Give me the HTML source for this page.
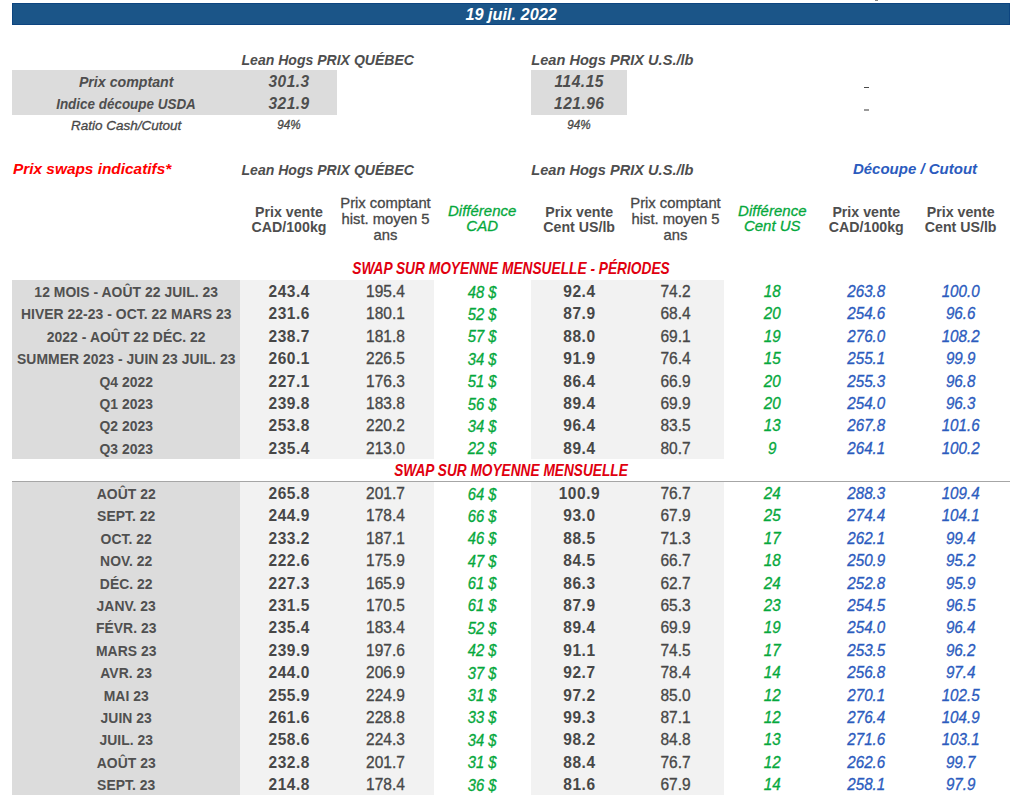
<!DOCTYPE html>
<html><head><meta charset="utf-8"><title>Lean Hogs</title>
<style>
html,body{margin:0;padding:0;background:#fff;}
body{width:1024px;height:795px;overflow:hidden;position:relative;font-family:"Liberation Sans", sans-serif;}
</style></head><body>
<div style="position:absolute;left:12px;top:2.6px;width:997.5px;height:22.2px;background:#1b5588;box-shadow:inset 0 0 0 1px #0d4580"></div>
<div style="position:absolute;left:12px;top:70px;width:325px;height:44.6px;background:#dcdcdc;"></div>
<div style="position:absolute;left:531px;top:70px;width:96px;height:44.6px;background:#dcdcdc;"></div>
<div style="position:absolute;left:12px;top:280px;width:228px;height:178.6px;background:#dcdcdc;"></div>
<div style="position:absolute;left:240px;top:280px;width:194px;height:178.6px;background:#f2f2f2;"></div>
<div style="position:absolute;left:531px;top:280px;width:193px;height:178.6px;background:#f2f2f2;"></div>
<div style="position:absolute;left:12px;top:481px;width:997.5px;height:1px;background:#a6a6a6;"></div>
<div style="position:absolute;left:12px;top:482px;width:228px;height:313px;background:#dcdcdc;"></div>
<div style="position:absolute;left:240px;top:482px;width:194px;height:313px;background:#f2f2f2;"></div>
<div style="position:absolute;left:531px;top:482px;width:193px;height:313px;background:#f2f2f2;"></div>
<div style="position:absolute;left:311.10px;top:3.50px;width:400px;text-align:center;line-height:20px;height:20px;font-size:16.3px;font-weight:bold;font-style:italic;color:#ffffff;white-space:nowrap">19 juil. 2022</div>
<div style="position:absolute;left:241.50px;top:49.50px;line-height:20px;height:20px;font-size:14.05px;font-weight:bold;font-style:italic;color:#4e4e4e;transform:scale(1.0,1.08);transform-origin:0 15.00px;white-space:nowrap">Lean Hogs PRIX QUÉBEC</div>
<div style="position:absolute;left:531.30px;top:49.50px;line-height:20px;height:20px;font-size:14.6px;font-weight:bold;font-style:italic;color:#4e4e4e;transform:scale(1.0,1.05);transform-origin:0 15.00px;white-space:nowrap">Lean Hogs PRIX U.S./lb</div>
<div style="position:absolute;left:-73.80px;top:71.90px;width:400px;text-align:center;line-height:20px;height:20px;font-size:14.2px;font-weight:bold;font-style:italic;color:#4e4e4e;white-space:nowrap">Prix comptant</div>
<div style="position:absolute;left:-73.80px;top:93.90px;width:400px;text-align:center;line-height:20px;height:20px;font-size:14.3px;font-weight:bold;font-style:italic;color:#4e4e4e;transform:scale(0.94,1.0);transform-origin:50% 15.00px;white-space:nowrap">Indice découpe USDA</div>
<div style="position:absolute;left:89.05px;top:72.40px;width:400px;text-align:center;line-height:20px;height:20px;font-size:15.5px;font-weight:bold;font-style:italic;color:#4e4e4e;letter-spacing:0.5px;transform:scale(1.0,1.06);transform-origin:50% 15.50px;white-space:nowrap">301.3</div>
<div style="position:absolute;left:89.05px;top:94.40px;width:400px;text-align:center;line-height:20px;height:20px;font-size:15.5px;font-weight:bold;font-style:italic;color:#4e4e4e;letter-spacing:0.5px;transform:scale(1.0,1.06);transform-origin:50% 15.50px;white-space:nowrap">321.9</div>
<div style="position:absolute;left:379.25px;top:72.40px;width:400px;text-align:center;line-height:20px;height:20px;font-size:15.5px;font-weight:bold;font-style:italic;color:#4e4e4e;letter-spacing:0.5px;transform:scale(1.0,1.06);transform-origin:50% 15.50px;white-space:nowrap">114.15</div>
<div style="position:absolute;left:379.25px;top:94.40px;width:400px;text-align:center;line-height:20px;height:20px;font-size:15.5px;font-weight:bold;font-style:italic;color:#4e4e4e;letter-spacing:0.5px;transform:scale(1.0,1.06);transform-origin:50% 15.50px;white-space:nowrap">121.96</div>
<div style="position:absolute;left:-73.80px;top:115.70px;width:400px;text-align:center;line-height:20px;height:20px;font-size:13.5px;font-weight:normal;font-style:italic;color:#474747;-webkit-text-stroke:0.3px #474747;white-space:nowrap">Ratio Cash/Cutout</div>
<div style="position:absolute;left:89.00px;top:114.70px;width:400px;text-align:center;line-height:20px;height:20px;font-size:11.7px;font-weight:normal;font-style:italic;color:#474747;-webkit-text-stroke:0.3px #474747;transform:scale(1.0,1.12);transform-origin:50% 14.50px;white-space:nowrap">94%</div>
<div style="position:absolute;left:379.00px;top:114.70px;width:400px;text-align:center;line-height:20px;height:20px;font-size:11.7px;font-weight:normal;font-style:italic;color:#474747;-webkit-text-stroke:0.3px #474747;transform:scale(1.0,1.12);transform-origin:50% 14.50px;white-space:nowrap">94%</div>
<div style="position:absolute;left:864px;top:87px;width:5px;height:1px;background:#4a4a4a;"></div>
<div style="position:absolute;left:875px;top:0px;width:3px;height:1px;background:#8a8a8a;"></div>
<div style="position:absolute;left:864px;top:109px;width:5px;height:2px;background:#9a9a9a;"></div>
<div style="position:absolute;left:13.00px;top:159.10px;line-height:20px;height:20px;font-size:15.4px;font-weight:bold;font-style:italic;color:#ff0000;white-space:nowrap">Prix swaps indicatifs*</div>
<div style="position:absolute;left:241.50px;top:159.60px;line-height:20px;height:20px;font-size:14.05px;font-weight:bold;font-style:italic;color:#4e4e4e;transform:scale(1.0,1.08);transform-origin:0 15.00px;white-space:nowrap">Lean Hogs PRIX QUÉBEC</div>
<div style="position:absolute;left:531.30px;top:159.60px;line-height:20px;height:20px;font-size:14.6px;font-weight:bold;font-style:italic;color:#4e4e4e;transform:scale(1.0,1.05);transform-origin:0 15.00px;white-space:nowrap">Lean Hogs PRIX U.S./lb</div>
<div style="position:absolute;left:715.00px;top:159.20px;width:400px;text-align:center;line-height:20px;height:20px;font-size:15.0px;font-weight:bold;font-style:italic;color:#2b5bbe;white-space:nowrap">Découpe / Cutout</div>
<div style="position:absolute;left:89.00px;top:201.60px;width:400px;text-align:center;line-height:20px;height:20px;font-size:14.2px;font-weight:bold;font-style:normal;color:#4e4e4e;white-space:nowrap">Prix vente</div>
<div style="position:absolute;left:89.00px;top:216.90px;width:400px;text-align:center;line-height:20px;height:20px;font-size:14.2px;font-weight:bold;font-style:normal;color:#4e4e4e;white-space:nowrap">CAD/100kg</div>
<div style="position:absolute;left:185.50px;top:193.40px;width:400px;text-align:center;line-height:20px;height:20px;font-size:14.8px;font-weight:normal;font-style:normal;color:#474747;-webkit-text-stroke:0.3px #474747;white-space:nowrap">Prix comptant</div>
<div style="position:absolute;left:185.50px;top:209.20px;width:400px;text-align:center;line-height:20px;height:20px;font-size:14.8px;font-weight:normal;font-style:normal;color:#474747;-webkit-text-stroke:0.3px #474747;white-space:nowrap">hist. moyen 5</div>
<div style="position:absolute;left:185.50px;top:225.10px;width:400px;text-align:center;line-height:20px;height:20px;font-size:14.8px;font-weight:normal;font-style:normal;color:#474747;-webkit-text-stroke:0.3px #474747;white-space:nowrap">ans</div>
<div style="position:absolute;left:282.20px;top:201.10px;width:400px;text-align:center;line-height:20px;height:20px;font-size:15.0px;font-weight:normal;font-style:italic;color:#05a83c;-webkit-text-stroke:0.3px #05a83c;white-space:nowrap">Différence</div>
<div style="position:absolute;left:282.20px;top:216.40px;width:400px;text-align:center;line-height:20px;height:20px;font-size:15.0px;font-weight:normal;font-style:italic;color:#05a83c;-webkit-text-stroke:0.3px #05a83c;white-space:nowrap">CAD</div>
<div style="position:absolute;left:379.20px;top:201.60px;width:400px;text-align:center;line-height:20px;height:20px;font-size:14.2px;font-weight:bold;font-style:normal;color:#4e4e4e;white-space:nowrap">Prix vente</div>
<div style="position:absolute;left:379.20px;top:216.90px;width:400px;text-align:center;line-height:20px;height:20px;font-size:14.2px;font-weight:bold;font-style:normal;color:#4e4e4e;white-space:nowrap">Cent US/lb</div>
<div style="position:absolute;left:475.50px;top:193.40px;width:400px;text-align:center;line-height:20px;height:20px;font-size:14.8px;font-weight:normal;font-style:normal;color:#474747;-webkit-text-stroke:0.3px #474747;white-space:nowrap">Prix comptant</div>
<div style="position:absolute;left:475.50px;top:209.20px;width:400px;text-align:center;line-height:20px;height:20px;font-size:14.8px;font-weight:normal;font-style:normal;color:#474747;-webkit-text-stroke:0.3px #474747;white-space:nowrap">hist. moyen 5</div>
<div style="position:absolute;left:475.50px;top:225.10px;width:400px;text-align:center;line-height:20px;height:20px;font-size:14.8px;font-weight:normal;font-style:normal;color:#474747;-webkit-text-stroke:0.3px #474747;white-space:nowrap">ans</div>
<div style="position:absolute;left:572.30px;top:201.10px;width:400px;text-align:center;line-height:20px;height:20px;font-size:15.0px;font-weight:normal;font-style:italic;color:#05a83c;-webkit-text-stroke:0.3px #05a83c;white-space:nowrap">Différence</div>
<div style="position:absolute;left:572.30px;top:216.40px;width:400px;text-align:center;line-height:20px;height:20px;font-size:15.0px;font-weight:normal;font-style:italic;color:#05a83c;-webkit-text-stroke:0.3px #05a83c;white-space:nowrap">Cent US</div>
<div style="position:absolute;left:666.30px;top:201.60px;width:400px;text-align:center;line-height:20px;height:20px;font-size:14.2px;font-weight:bold;font-style:normal;color:#4e4e4e;white-space:nowrap">Prix vente</div>
<div style="position:absolute;left:666.30px;top:216.90px;width:400px;text-align:center;line-height:20px;height:20px;font-size:14.2px;font-weight:bold;font-style:normal;color:#4e4e4e;white-space:nowrap">CAD/100kg</div>
<div style="position:absolute;left:760.70px;top:201.60px;width:400px;text-align:center;line-height:20px;height:20px;font-size:14.2px;font-weight:bold;font-style:normal;color:#4e4e4e;white-space:nowrap">Prix vente</div>
<div style="position:absolute;left:760.70px;top:216.90px;width:400px;text-align:center;line-height:20px;height:20px;font-size:14.2px;font-weight:bold;font-style:normal;color:#4e4e4e;white-space:nowrap">Cent US/lb</div>
<div style="position:absolute;left:311.20px;top:258.90px;width:400px;text-align:center;line-height:20px;height:20px;font-size:15.0px;font-weight:bold;font-style:italic;color:#e0000f;transform:scale(0.915,1.08);transform-origin:50% 15.50px;white-space:nowrap">SWAP SUR MOYENNE MENSUELLE - PÉRIODES</div>
<div style="position:absolute;left:310.50px;top:461.10px;width:400px;text-align:center;line-height:20px;height:20px;font-size:15.0px;font-weight:bold;font-style:italic;color:#e0000f;transform:scale(0.912,1.08);transform-origin:50% 15.50px;white-space:nowrap">SWAP SUR MOYENNE MENSUELLE</div>
<div style="position:absolute;left:-73.77px;top:282.10px;width:400px;text-align:center;line-height:20px;height:20px;font-size:13.9px;font-weight:bold;font-style:normal;color:#505050;letter-spacing:0.05px;transform:scale(1.0,1.1);transform-origin:50% 15.00px;white-space:nowrap">12 MOIS - AOÛT 22 JUIL. 23</div>
<div style="position:absolute;left:89.28px;top:282.10px;width:400px;text-align:center;line-height:20px;height:20px;font-size:15.5px;font-weight:bold;font-style:normal;color:#474747;letter-spacing:0.55px;transform:scale(1.0,1.08);transform-origin:50% 15.50px;white-space:nowrap">243.4</div>
<div style="position:absolute;left:185.50px;top:282.10px;width:400px;text-align:center;line-height:20px;height:20px;font-size:15.5px;font-weight:normal;font-style:normal;color:#474747;-webkit-text-stroke:0.3px #474747;transform:scale(1.0,1.08);transform-origin:50% 15.50px;white-space:nowrap">195.4</div>
<div style="position:absolute;left:282.20px;top:282.60px;width:400px;text-align:center;line-height:20px;height:20px;font-size:14.8px;font-weight:normal;font-style:italic;color:#05a83c;-webkit-text-stroke:0.3px #05a83c;transform:scale(1.0,1.1);transform-origin:50% 15.00px;white-space:nowrap">48 $</div>
<div style="position:absolute;left:379.48px;top:282.10px;width:400px;text-align:center;line-height:20px;height:20px;font-size:15.5px;font-weight:bold;font-style:normal;color:#474747;letter-spacing:0.55px;transform:scale(1.0,1.08);transform-origin:50% 15.50px;white-space:nowrap">92.4</div>
<div style="position:absolute;left:475.50px;top:282.10px;width:400px;text-align:center;line-height:20px;height:20px;font-size:15.5px;font-weight:normal;font-style:normal;color:#474747;-webkit-text-stroke:0.3px #474747;transform:scale(1.0,1.08);transform-origin:50% 15.50px;white-space:nowrap">74.2</div>
<div style="position:absolute;left:572.30px;top:282.10px;width:400px;text-align:center;line-height:20px;height:20px;font-size:15.2px;font-weight:normal;font-style:italic;color:#05a83c;-webkit-text-stroke:0.3px #05a83c;transform:scale(1.0,1.1);transform-origin:50% 15.50px;white-space:nowrap">18</div>
<div style="position:absolute;left:666.30px;top:282.10px;width:400px;text-align:center;line-height:20px;height:20px;font-size:15.2px;font-weight:normal;font-style:italic;color:#2b5bbe;-webkit-text-stroke:0.3px #2b5bbe;transform:scale(1.0,1.1);transform-origin:50% 15.50px;white-space:nowrap">263.8</div>
<div style="position:absolute;left:760.70px;top:282.10px;width:400px;text-align:center;line-height:20px;height:20px;font-size:15.2px;font-weight:normal;font-style:italic;color:#2b5bbe;-webkit-text-stroke:0.3px #2b5bbe;transform:scale(1.0,1.1);transform-origin:50% 15.50px;white-space:nowrap">100.0</div>
<div style="position:absolute;left:-73.77px;top:304.49px;width:400px;text-align:center;line-height:20px;height:20px;font-size:13.9px;font-weight:bold;font-style:normal;color:#505050;letter-spacing:0.05px;transform:scale(1.0,1.1);transform-origin:50% 15.00px;white-space:nowrap">HIVER 22-23 - OCT. 22 MARS 23</div>
<div style="position:absolute;left:89.28px;top:304.49px;width:400px;text-align:center;line-height:20px;height:20px;font-size:15.5px;font-weight:bold;font-style:normal;color:#474747;letter-spacing:0.55px;transform:scale(1.0,1.08);transform-origin:50% 15.50px;white-space:nowrap">231.6</div>
<div style="position:absolute;left:185.50px;top:304.49px;width:400px;text-align:center;line-height:20px;height:20px;font-size:15.5px;font-weight:normal;font-style:normal;color:#474747;-webkit-text-stroke:0.3px #474747;transform:scale(1.0,1.08);transform-origin:50% 15.50px;white-space:nowrap">180.1</div>
<div style="position:absolute;left:282.20px;top:304.99px;width:400px;text-align:center;line-height:20px;height:20px;font-size:14.8px;font-weight:normal;font-style:italic;color:#05a83c;-webkit-text-stroke:0.3px #05a83c;transform:scale(1.0,1.1);transform-origin:50% 15.00px;white-space:nowrap">52 $</div>
<div style="position:absolute;left:379.48px;top:304.49px;width:400px;text-align:center;line-height:20px;height:20px;font-size:15.5px;font-weight:bold;font-style:normal;color:#474747;letter-spacing:0.55px;transform:scale(1.0,1.08);transform-origin:50% 15.50px;white-space:nowrap">87.9</div>
<div style="position:absolute;left:475.50px;top:304.49px;width:400px;text-align:center;line-height:20px;height:20px;font-size:15.5px;font-weight:normal;font-style:normal;color:#474747;-webkit-text-stroke:0.3px #474747;transform:scale(1.0,1.08);transform-origin:50% 15.50px;white-space:nowrap">68.4</div>
<div style="position:absolute;left:572.30px;top:304.49px;width:400px;text-align:center;line-height:20px;height:20px;font-size:15.2px;font-weight:normal;font-style:italic;color:#05a83c;-webkit-text-stroke:0.3px #05a83c;transform:scale(1.0,1.1);transform-origin:50% 15.50px;white-space:nowrap">20</div>
<div style="position:absolute;left:666.30px;top:304.49px;width:400px;text-align:center;line-height:20px;height:20px;font-size:15.2px;font-weight:normal;font-style:italic;color:#2b5bbe;-webkit-text-stroke:0.3px #2b5bbe;transform:scale(1.0,1.1);transform-origin:50% 15.50px;white-space:nowrap">254.6</div>
<div style="position:absolute;left:760.70px;top:304.49px;width:400px;text-align:center;line-height:20px;height:20px;font-size:15.2px;font-weight:normal;font-style:italic;color:#2b5bbe;-webkit-text-stroke:0.3px #2b5bbe;transform:scale(1.0,1.1);transform-origin:50% 15.50px;white-space:nowrap">96.6</div>
<div style="position:absolute;left:-73.77px;top:326.88px;width:400px;text-align:center;line-height:20px;height:20px;font-size:13.9px;font-weight:bold;font-style:normal;color:#505050;letter-spacing:0.05px;transform:scale(1.0,1.1);transform-origin:50% 15.00px;white-space:nowrap">2022 - AOÛT 22 DÉC. 22</div>
<div style="position:absolute;left:89.28px;top:326.88px;width:400px;text-align:center;line-height:20px;height:20px;font-size:15.5px;font-weight:bold;font-style:normal;color:#474747;letter-spacing:0.55px;transform:scale(1.0,1.08);transform-origin:50% 15.50px;white-space:nowrap">238.7</div>
<div style="position:absolute;left:185.50px;top:326.88px;width:400px;text-align:center;line-height:20px;height:20px;font-size:15.5px;font-weight:normal;font-style:normal;color:#474747;-webkit-text-stroke:0.3px #474747;transform:scale(1.0,1.08);transform-origin:50% 15.50px;white-space:nowrap">181.8</div>
<div style="position:absolute;left:282.20px;top:327.38px;width:400px;text-align:center;line-height:20px;height:20px;font-size:14.8px;font-weight:normal;font-style:italic;color:#05a83c;-webkit-text-stroke:0.3px #05a83c;transform:scale(1.0,1.1);transform-origin:50% 15.00px;white-space:nowrap">57 $</div>
<div style="position:absolute;left:379.48px;top:326.88px;width:400px;text-align:center;line-height:20px;height:20px;font-size:15.5px;font-weight:bold;font-style:normal;color:#474747;letter-spacing:0.55px;transform:scale(1.0,1.08);transform-origin:50% 15.50px;white-space:nowrap">88.0</div>
<div style="position:absolute;left:475.50px;top:326.88px;width:400px;text-align:center;line-height:20px;height:20px;font-size:15.5px;font-weight:normal;font-style:normal;color:#474747;-webkit-text-stroke:0.3px #474747;transform:scale(1.0,1.08);transform-origin:50% 15.50px;white-space:nowrap">69.1</div>
<div style="position:absolute;left:572.30px;top:326.88px;width:400px;text-align:center;line-height:20px;height:20px;font-size:15.2px;font-weight:normal;font-style:italic;color:#05a83c;-webkit-text-stroke:0.3px #05a83c;transform:scale(1.0,1.1);transform-origin:50% 15.50px;white-space:nowrap">19</div>
<div style="position:absolute;left:666.30px;top:326.88px;width:400px;text-align:center;line-height:20px;height:20px;font-size:15.2px;font-weight:normal;font-style:italic;color:#2b5bbe;-webkit-text-stroke:0.3px #2b5bbe;transform:scale(1.0,1.1);transform-origin:50% 15.50px;white-space:nowrap">276.0</div>
<div style="position:absolute;left:760.70px;top:326.88px;width:400px;text-align:center;line-height:20px;height:20px;font-size:15.2px;font-weight:normal;font-style:italic;color:#2b5bbe;-webkit-text-stroke:0.3px #2b5bbe;transform:scale(1.0,1.1);transform-origin:50% 15.50px;white-space:nowrap">108.2</div>
<div style="position:absolute;left:-73.77px;top:349.27px;width:400px;text-align:center;line-height:20px;height:20px;font-size:13.9px;font-weight:bold;font-style:normal;color:#505050;letter-spacing:0.05px;transform:scale(1.0,1.1);transform-origin:50% 15.00px;white-space:nowrap">SUMMER 2023 - JUIN 23 JUIL. 23</div>
<div style="position:absolute;left:89.28px;top:349.27px;width:400px;text-align:center;line-height:20px;height:20px;font-size:15.5px;font-weight:bold;font-style:normal;color:#474747;letter-spacing:0.55px;transform:scale(1.0,1.08);transform-origin:50% 15.50px;white-space:nowrap">260.1</div>
<div style="position:absolute;left:185.50px;top:349.27px;width:400px;text-align:center;line-height:20px;height:20px;font-size:15.5px;font-weight:normal;font-style:normal;color:#474747;-webkit-text-stroke:0.3px #474747;transform:scale(1.0,1.08);transform-origin:50% 15.50px;white-space:nowrap">226.5</div>
<div style="position:absolute;left:282.20px;top:349.77px;width:400px;text-align:center;line-height:20px;height:20px;font-size:14.8px;font-weight:normal;font-style:italic;color:#05a83c;-webkit-text-stroke:0.3px #05a83c;transform:scale(1.0,1.1);transform-origin:50% 15.00px;white-space:nowrap">34 $</div>
<div style="position:absolute;left:379.48px;top:349.27px;width:400px;text-align:center;line-height:20px;height:20px;font-size:15.5px;font-weight:bold;font-style:normal;color:#474747;letter-spacing:0.55px;transform:scale(1.0,1.08);transform-origin:50% 15.50px;white-space:nowrap">91.9</div>
<div style="position:absolute;left:475.50px;top:349.27px;width:400px;text-align:center;line-height:20px;height:20px;font-size:15.5px;font-weight:normal;font-style:normal;color:#474747;-webkit-text-stroke:0.3px #474747;transform:scale(1.0,1.08);transform-origin:50% 15.50px;white-space:nowrap">76.4</div>
<div style="position:absolute;left:572.30px;top:349.27px;width:400px;text-align:center;line-height:20px;height:20px;font-size:15.2px;font-weight:normal;font-style:italic;color:#05a83c;-webkit-text-stroke:0.3px #05a83c;transform:scale(1.0,1.1);transform-origin:50% 15.50px;white-space:nowrap">15</div>
<div style="position:absolute;left:666.30px;top:349.27px;width:400px;text-align:center;line-height:20px;height:20px;font-size:15.2px;font-weight:normal;font-style:italic;color:#2b5bbe;-webkit-text-stroke:0.3px #2b5bbe;transform:scale(1.0,1.1);transform-origin:50% 15.50px;white-space:nowrap">255.1</div>
<div style="position:absolute;left:760.70px;top:349.27px;width:400px;text-align:center;line-height:20px;height:20px;font-size:15.2px;font-weight:normal;font-style:italic;color:#2b5bbe;-webkit-text-stroke:0.3px #2b5bbe;transform:scale(1.0,1.1);transform-origin:50% 15.50px;white-space:nowrap">99.9</div>
<div style="position:absolute;left:-73.77px;top:371.66px;width:400px;text-align:center;line-height:20px;height:20px;font-size:13.9px;font-weight:bold;font-style:normal;color:#505050;letter-spacing:0.05px;transform:scale(1.0,1.1);transform-origin:50% 15.00px;white-space:nowrap">Q4 2022</div>
<div style="position:absolute;left:89.28px;top:371.66px;width:400px;text-align:center;line-height:20px;height:20px;font-size:15.5px;font-weight:bold;font-style:normal;color:#474747;letter-spacing:0.55px;transform:scale(1.0,1.08);transform-origin:50% 15.50px;white-space:nowrap">227.1</div>
<div style="position:absolute;left:185.50px;top:371.66px;width:400px;text-align:center;line-height:20px;height:20px;font-size:15.5px;font-weight:normal;font-style:normal;color:#474747;-webkit-text-stroke:0.3px #474747;transform:scale(1.0,1.08);transform-origin:50% 15.50px;white-space:nowrap">176.3</div>
<div style="position:absolute;left:282.20px;top:372.16px;width:400px;text-align:center;line-height:20px;height:20px;font-size:14.8px;font-weight:normal;font-style:italic;color:#05a83c;-webkit-text-stroke:0.3px #05a83c;transform:scale(1.0,1.1);transform-origin:50% 15.00px;white-space:nowrap">51 $</div>
<div style="position:absolute;left:379.48px;top:371.66px;width:400px;text-align:center;line-height:20px;height:20px;font-size:15.5px;font-weight:bold;font-style:normal;color:#474747;letter-spacing:0.55px;transform:scale(1.0,1.08);transform-origin:50% 15.50px;white-space:nowrap">86.4</div>
<div style="position:absolute;left:475.50px;top:371.66px;width:400px;text-align:center;line-height:20px;height:20px;font-size:15.5px;font-weight:normal;font-style:normal;color:#474747;-webkit-text-stroke:0.3px #474747;transform:scale(1.0,1.08);transform-origin:50% 15.50px;white-space:nowrap">66.9</div>
<div style="position:absolute;left:572.30px;top:371.66px;width:400px;text-align:center;line-height:20px;height:20px;font-size:15.2px;font-weight:normal;font-style:italic;color:#05a83c;-webkit-text-stroke:0.3px #05a83c;transform:scale(1.0,1.1);transform-origin:50% 15.50px;white-space:nowrap">20</div>
<div style="position:absolute;left:666.30px;top:371.66px;width:400px;text-align:center;line-height:20px;height:20px;font-size:15.2px;font-weight:normal;font-style:italic;color:#2b5bbe;-webkit-text-stroke:0.3px #2b5bbe;transform:scale(1.0,1.1);transform-origin:50% 15.50px;white-space:nowrap">255.3</div>
<div style="position:absolute;left:760.70px;top:371.66px;width:400px;text-align:center;line-height:20px;height:20px;font-size:15.2px;font-weight:normal;font-style:italic;color:#2b5bbe;-webkit-text-stroke:0.3px #2b5bbe;transform:scale(1.0,1.1);transform-origin:50% 15.50px;white-space:nowrap">96.8</div>
<div style="position:absolute;left:-73.77px;top:394.05px;width:400px;text-align:center;line-height:20px;height:20px;font-size:13.9px;font-weight:bold;font-style:normal;color:#505050;letter-spacing:0.05px;transform:scale(1.0,1.1);transform-origin:50% 15.00px;white-space:nowrap">Q1 2023</div>
<div style="position:absolute;left:89.28px;top:394.05px;width:400px;text-align:center;line-height:20px;height:20px;font-size:15.5px;font-weight:bold;font-style:normal;color:#474747;letter-spacing:0.55px;transform:scale(1.0,1.08);transform-origin:50% 15.50px;white-space:nowrap">239.8</div>
<div style="position:absolute;left:185.50px;top:394.05px;width:400px;text-align:center;line-height:20px;height:20px;font-size:15.5px;font-weight:normal;font-style:normal;color:#474747;-webkit-text-stroke:0.3px #474747;transform:scale(1.0,1.08);transform-origin:50% 15.50px;white-space:nowrap">183.8</div>
<div style="position:absolute;left:282.20px;top:394.55px;width:400px;text-align:center;line-height:20px;height:20px;font-size:14.8px;font-weight:normal;font-style:italic;color:#05a83c;-webkit-text-stroke:0.3px #05a83c;transform:scale(1.0,1.1);transform-origin:50% 15.00px;white-space:nowrap">56 $</div>
<div style="position:absolute;left:379.48px;top:394.05px;width:400px;text-align:center;line-height:20px;height:20px;font-size:15.5px;font-weight:bold;font-style:normal;color:#474747;letter-spacing:0.55px;transform:scale(1.0,1.08);transform-origin:50% 15.50px;white-space:nowrap">89.4</div>
<div style="position:absolute;left:475.50px;top:394.05px;width:400px;text-align:center;line-height:20px;height:20px;font-size:15.5px;font-weight:normal;font-style:normal;color:#474747;-webkit-text-stroke:0.3px #474747;transform:scale(1.0,1.08);transform-origin:50% 15.50px;white-space:nowrap">69.9</div>
<div style="position:absolute;left:572.30px;top:394.05px;width:400px;text-align:center;line-height:20px;height:20px;font-size:15.2px;font-weight:normal;font-style:italic;color:#05a83c;-webkit-text-stroke:0.3px #05a83c;transform:scale(1.0,1.1);transform-origin:50% 15.50px;white-space:nowrap">20</div>
<div style="position:absolute;left:666.30px;top:394.05px;width:400px;text-align:center;line-height:20px;height:20px;font-size:15.2px;font-weight:normal;font-style:italic;color:#2b5bbe;-webkit-text-stroke:0.3px #2b5bbe;transform:scale(1.0,1.1);transform-origin:50% 15.50px;white-space:nowrap">254.0</div>
<div style="position:absolute;left:760.70px;top:394.05px;width:400px;text-align:center;line-height:20px;height:20px;font-size:15.2px;font-weight:normal;font-style:italic;color:#2b5bbe;-webkit-text-stroke:0.3px #2b5bbe;transform:scale(1.0,1.1);transform-origin:50% 15.50px;white-space:nowrap">96.3</div>
<div style="position:absolute;left:-73.77px;top:416.44px;width:400px;text-align:center;line-height:20px;height:20px;font-size:13.9px;font-weight:bold;font-style:normal;color:#505050;letter-spacing:0.05px;transform:scale(1.0,1.1);transform-origin:50% 15.00px;white-space:nowrap">Q2 2023</div>
<div style="position:absolute;left:89.28px;top:416.44px;width:400px;text-align:center;line-height:20px;height:20px;font-size:15.5px;font-weight:bold;font-style:normal;color:#474747;letter-spacing:0.55px;transform:scale(1.0,1.08);transform-origin:50% 15.50px;white-space:nowrap">253.8</div>
<div style="position:absolute;left:185.50px;top:416.44px;width:400px;text-align:center;line-height:20px;height:20px;font-size:15.5px;font-weight:normal;font-style:normal;color:#474747;-webkit-text-stroke:0.3px #474747;transform:scale(1.0,1.08);transform-origin:50% 15.50px;white-space:nowrap">220.2</div>
<div style="position:absolute;left:282.20px;top:416.94px;width:400px;text-align:center;line-height:20px;height:20px;font-size:14.8px;font-weight:normal;font-style:italic;color:#05a83c;-webkit-text-stroke:0.3px #05a83c;transform:scale(1.0,1.1);transform-origin:50% 15.00px;white-space:nowrap">34 $</div>
<div style="position:absolute;left:379.48px;top:416.44px;width:400px;text-align:center;line-height:20px;height:20px;font-size:15.5px;font-weight:bold;font-style:normal;color:#474747;letter-spacing:0.55px;transform:scale(1.0,1.08);transform-origin:50% 15.50px;white-space:nowrap">96.4</div>
<div style="position:absolute;left:475.50px;top:416.44px;width:400px;text-align:center;line-height:20px;height:20px;font-size:15.5px;font-weight:normal;font-style:normal;color:#474747;-webkit-text-stroke:0.3px #474747;transform:scale(1.0,1.08);transform-origin:50% 15.50px;white-space:nowrap">83.5</div>
<div style="position:absolute;left:572.30px;top:416.44px;width:400px;text-align:center;line-height:20px;height:20px;font-size:15.2px;font-weight:normal;font-style:italic;color:#05a83c;-webkit-text-stroke:0.3px #05a83c;transform:scale(1.0,1.1);transform-origin:50% 15.50px;white-space:nowrap">13</div>
<div style="position:absolute;left:666.30px;top:416.44px;width:400px;text-align:center;line-height:20px;height:20px;font-size:15.2px;font-weight:normal;font-style:italic;color:#2b5bbe;-webkit-text-stroke:0.3px #2b5bbe;transform:scale(1.0,1.1);transform-origin:50% 15.50px;white-space:nowrap">267.8</div>
<div style="position:absolute;left:760.70px;top:416.44px;width:400px;text-align:center;line-height:20px;height:20px;font-size:15.2px;font-weight:normal;font-style:italic;color:#2b5bbe;-webkit-text-stroke:0.3px #2b5bbe;transform:scale(1.0,1.1);transform-origin:50% 15.50px;white-space:nowrap">101.6</div>
<div style="position:absolute;left:-73.77px;top:438.83px;width:400px;text-align:center;line-height:20px;height:20px;font-size:13.9px;font-weight:bold;font-style:normal;color:#505050;letter-spacing:0.05px;transform:scale(1.0,1.1);transform-origin:50% 15.00px;white-space:nowrap">Q3 2023</div>
<div style="position:absolute;left:89.28px;top:438.83px;width:400px;text-align:center;line-height:20px;height:20px;font-size:15.5px;font-weight:bold;font-style:normal;color:#474747;letter-spacing:0.55px;transform:scale(1.0,1.08);transform-origin:50% 15.50px;white-space:nowrap">235.4</div>
<div style="position:absolute;left:185.50px;top:438.83px;width:400px;text-align:center;line-height:20px;height:20px;font-size:15.5px;font-weight:normal;font-style:normal;color:#474747;-webkit-text-stroke:0.3px #474747;transform:scale(1.0,1.08);transform-origin:50% 15.50px;white-space:nowrap">213.0</div>
<div style="position:absolute;left:282.20px;top:439.33px;width:400px;text-align:center;line-height:20px;height:20px;font-size:14.8px;font-weight:normal;font-style:italic;color:#05a83c;-webkit-text-stroke:0.3px #05a83c;transform:scale(1.0,1.1);transform-origin:50% 15.00px;white-space:nowrap">22 $</div>
<div style="position:absolute;left:379.48px;top:438.83px;width:400px;text-align:center;line-height:20px;height:20px;font-size:15.5px;font-weight:bold;font-style:normal;color:#474747;letter-spacing:0.55px;transform:scale(1.0,1.08);transform-origin:50% 15.50px;white-space:nowrap">89.4</div>
<div style="position:absolute;left:475.50px;top:438.83px;width:400px;text-align:center;line-height:20px;height:20px;font-size:15.5px;font-weight:normal;font-style:normal;color:#474747;-webkit-text-stroke:0.3px #474747;transform:scale(1.0,1.08);transform-origin:50% 15.50px;white-space:nowrap">80.7</div>
<div style="position:absolute;left:572.30px;top:438.83px;width:400px;text-align:center;line-height:20px;height:20px;font-size:15.2px;font-weight:normal;font-style:italic;color:#05a83c;-webkit-text-stroke:0.3px #05a83c;transform:scale(1.0,1.1);transform-origin:50% 15.50px;white-space:nowrap">9</div>
<div style="position:absolute;left:666.30px;top:438.83px;width:400px;text-align:center;line-height:20px;height:20px;font-size:15.2px;font-weight:normal;font-style:italic;color:#2b5bbe;-webkit-text-stroke:0.3px #2b5bbe;transform:scale(1.0,1.1);transform-origin:50% 15.50px;white-space:nowrap">264.1</div>
<div style="position:absolute;left:760.70px;top:438.83px;width:400px;text-align:center;line-height:20px;height:20px;font-size:15.2px;font-weight:normal;font-style:italic;color:#2b5bbe;-webkit-text-stroke:0.3px #2b5bbe;transform:scale(1.0,1.1);transform-origin:50% 15.50px;white-space:nowrap">100.2</div>
<div style="position:absolute;left:-73.77px;top:484.00px;width:400px;text-align:center;line-height:20px;height:20px;font-size:13.9px;font-weight:bold;font-style:normal;color:#505050;letter-spacing:0.05px;transform:scale(1.0,1.1);transform-origin:50% 15.00px;white-space:nowrap">AOÛT 22</div>
<div style="position:absolute;left:89.28px;top:484.00px;width:400px;text-align:center;line-height:20px;height:20px;font-size:15.5px;font-weight:bold;font-style:normal;color:#474747;letter-spacing:0.55px;transform:scale(1.0,1.08);transform-origin:50% 15.50px;white-space:nowrap">265.8</div>
<div style="position:absolute;left:185.50px;top:484.00px;width:400px;text-align:center;line-height:20px;height:20px;font-size:15.5px;font-weight:normal;font-style:normal;color:#474747;-webkit-text-stroke:0.3px #474747;transform:scale(1.0,1.08);transform-origin:50% 15.50px;white-space:nowrap">201.7</div>
<div style="position:absolute;left:282.20px;top:484.50px;width:400px;text-align:center;line-height:20px;height:20px;font-size:14.8px;font-weight:normal;font-style:italic;color:#05a83c;-webkit-text-stroke:0.3px #05a83c;transform:scale(1.0,1.1);transform-origin:50% 15.00px;white-space:nowrap">64 $</div>
<div style="position:absolute;left:379.48px;top:484.00px;width:400px;text-align:center;line-height:20px;height:20px;font-size:15.5px;font-weight:bold;font-style:normal;color:#474747;letter-spacing:0.55px;transform:scale(1.0,1.08);transform-origin:50% 15.50px;white-space:nowrap">100.9</div>
<div style="position:absolute;left:475.50px;top:484.00px;width:400px;text-align:center;line-height:20px;height:20px;font-size:15.5px;font-weight:normal;font-style:normal;color:#474747;-webkit-text-stroke:0.3px #474747;transform:scale(1.0,1.08);transform-origin:50% 15.50px;white-space:nowrap">76.7</div>
<div style="position:absolute;left:572.30px;top:484.00px;width:400px;text-align:center;line-height:20px;height:20px;font-size:15.2px;font-weight:normal;font-style:italic;color:#05a83c;-webkit-text-stroke:0.3px #05a83c;transform:scale(1.0,1.1);transform-origin:50% 15.50px;white-space:nowrap">24</div>
<div style="position:absolute;left:666.30px;top:484.00px;width:400px;text-align:center;line-height:20px;height:20px;font-size:15.2px;font-weight:normal;font-style:italic;color:#2b5bbe;-webkit-text-stroke:0.3px #2b5bbe;transform:scale(1.0,1.1);transform-origin:50% 15.50px;white-space:nowrap">288.3</div>
<div style="position:absolute;left:760.70px;top:484.00px;width:400px;text-align:center;line-height:20px;height:20px;font-size:15.2px;font-weight:normal;font-style:italic;color:#2b5bbe;-webkit-text-stroke:0.3px #2b5bbe;transform:scale(1.0,1.1);transform-origin:50% 15.50px;white-space:nowrap">109.4</div>
<div style="position:absolute;left:-73.77px;top:506.39px;width:400px;text-align:center;line-height:20px;height:20px;font-size:13.9px;font-weight:bold;font-style:normal;color:#505050;letter-spacing:0.05px;transform:scale(1.0,1.1);transform-origin:50% 15.00px;white-space:nowrap">SEPT. 22</div>
<div style="position:absolute;left:89.28px;top:506.39px;width:400px;text-align:center;line-height:20px;height:20px;font-size:15.5px;font-weight:bold;font-style:normal;color:#474747;letter-spacing:0.55px;transform:scale(1.0,1.08);transform-origin:50% 15.50px;white-space:nowrap">244.9</div>
<div style="position:absolute;left:185.50px;top:506.39px;width:400px;text-align:center;line-height:20px;height:20px;font-size:15.5px;font-weight:normal;font-style:normal;color:#474747;-webkit-text-stroke:0.3px #474747;transform:scale(1.0,1.08);transform-origin:50% 15.50px;white-space:nowrap">178.4</div>
<div style="position:absolute;left:282.20px;top:506.89px;width:400px;text-align:center;line-height:20px;height:20px;font-size:14.8px;font-weight:normal;font-style:italic;color:#05a83c;-webkit-text-stroke:0.3px #05a83c;transform:scale(1.0,1.1);transform-origin:50% 15.00px;white-space:nowrap">66 $</div>
<div style="position:absolute;left:379.48px;top:506.39px;width:400px;text-align:center;line-height:20px;height:20px;font-size:15.5px;font-weight:bold;font-style:normal;color:#474747;letter-spacing:0.55px;transform:scale(1.0,1.08);transform-origin:50% 15.50px;white-space:nowrap">93.0</div>
<div style="position:absolute;left:475.50px;top:506.39px;width:400px;text-align:center;line-height:20px;height:20px;font-size:15.5px;font-weight:normal;font-style:normal;color:#474747;-webkit-text-stroke:0.3px #474747;transform:scale(1.0,1.08);transform-origin:50% 15.50px;white-space:nowrap">67.9</div>
<div style="position:absolute;left:572.30px;top:506.39px;width:400px;text-align:center;line-height:20px;height:20px;font-size:15.2px;font-weight:normal;font-style:italic;color:#05a83c;-webkit-text-stroke:0.3px #05a83c;transform:scale(1.0,1.1);transform-origin:50% 15.50px;white-space:nowrap">25</div>
<div style="position:absolute;left:666.30px;top:506.39px;width:400px;text-align:center;line-height:20px;height:20px;font-size:15.2px;font-weight:normal;font-style:italic;color:#2b5bbe;-webkit-text-stroke:0.3px #2b5bbe;transform:scale(1.0,1.1);transform-origin:50% 15.50px;white-space:nowrap">274.4</div>
<div style="position:absolute;left:760.70px;top:506.39px;width:400px;text-align:center;line-height:20px;height:20px;font-size:15.2px;font-weight:normal;font-style:italic;color:#2b5bbe;-webkit-text-stroke:0.3px #2b5bbe;transform:scale(1.0,1.1);transform-origin:50% 15.50px;white-space:nowrap">104.1</div>
<div style="position:absolute;left:-73.77px;top:528.78px;width:400px;text-align:center;line-height:20px;height:20px;font-size:13.9px;font-weight:bold;font-style:normal;color:#505050;letter-spacing:0.05px;transform:scale(1.0,1.1);transform-origin:50% 15.00px;white-space:nowrap">OCT. 22</div>
<div style="position:absolute;left:89.28px;top:528.78px;width:400px;text-align:center;line-height:20px;height:20px;font-size:15.5px;font-weight:bold;font-style:normal;color:#474747;letter-spacing:0.55px;transform:scale(1.0,1.08);transform-origin:50% 15.50px;white-space:nowrap">233.2</div>
<div style="position:absolute;left:185.50px;top:528.78px;width:400px;text-align:center;line-height:20px;height:20px;font-size:15.5px;font-weight:normal;font-style:normal;color:#474747;-webkit-text-stroke:0.3px #474747;transform:scale(1.0,1.08);transform-origin:50% 15.50px;white-space:nowrap">187.1</div>
<div style="position:absolute;left:282.20px;top:529.28px;width:400px;text-align:center;line-height:20px;height:20px;font-size:14.8px;font-weight:normal;font-style:italic;color:#05a83c;-webkit-text-stroke:0.3px #05a83c;transform:scale(1.0,1.1);transform-origin:50% 15.00px;white-space:nowrap">46 $</div>
<div style="position:absolute;left:379.48px;top:528.78px;width:400px;text-align:center;line-height:20px;height:20px;font-size:15.5px;font-weight:bold;font-style:normal;color:#474747;letter-spacing:0.55px;transform:scale(1.0,1.08);transform-origin:50% 15.50px;white-space:nowrap">88.5</div>
<div style="position:absolute;left:475.50px;top:528.78px;width:400px;text-align:center;line-height:20px;height:20px;font-size:15.5px;font-weight:normal;font-style:normal;color:#474747;-webkit-text-stroke:0.3px #474747;transform:scale(1.0,1.08);transform-origin:50% 15.50px;white-space:nowrap">71.3</div>
<div style="position:absolute;left:572.30px;top:528.78px;width:400px;text-align:center;line-height:20px;height:20px;font-size:15.2px;font-weight:normal;font-style:italic;color:#05a83c;-webkit-text-stroke:0.3px #05a83c;transform:scale(1.0,1.1);transform-origin:50% 15.50px;white-space:nowrap">17</div>
<div style="position:absolute;left:666.30px;top:528.78px;width:400px;text-align:center;line-height:20px;height:20px;font-size:15.2px;font-weight:normal;font-style:italic;color:#2b5bbe;-webkit-text-stroke:0.3px #2b5bbe;transform:scale(1.0,1.1);transform-origin:50% 15.50px;white-space:nowrap">262.1</div>
<div style="position:absolute;left:760.70px;top:528.78px;width:400px;text-align:center;line-height:20px;height:20px;font-size:15.2px;font-weight:normal;font-style:italic;color:#2b5bbe;-webkit-text-stroke:0.3px #2b5bbe;transform:scale(1.0,1.1);transform-origin:50% 15.50px;white-space:nowrap">99.4</div>
<div style="position:absolute;left:-73.77px;top:551.17px;width:400px;text-align:center;line-height:20px;height:20px;font-size:13.9px;font-weight:bold;font-style:normal;color:#505050;letter-spacing:0.05px;transform:scale(1.0,1.1);transform-origin:50% 15.00px;white-space:nowrap">NOV. 22</div>
<div style="position:absolute;left:89.28px;top:551.17px;width:400px;text-align:center;line-height:20px;height:20px;font-size:15.5px;font-weight:bold;font-style:normal;color:#474747;letter-spacing:0.55px;transform:scale(1.0,1.08);transform-origin:50% 15.50px;white-space:nowrap">222.6</div>
<div style="position:absolute;left:185.50px;top:551.17px;width:400px;text-align:center;line-height:20px;height:20px;font-size:15.5px;font-weight:normal;font-style:normal;color:#474747;-webkit-text-stroke:0.3px #474747;transform:scale(1.0,1.08);transform-origin:50% 15.50px;white-space:nowrap">175.9</div>
<div style="position:absolute;left:282.20px;top:551.67px;width:400px;text-align:center;line-height:20px;height:20px;font-size:14.8px;font-weight:normal;font-style:italic;color:#05a83c;-webkit-text-stroke:0.3px #05a83c;transform:scale(1.0,1.1);transform-origin:50% 15.00px;white-space:nowrap">47 $</div>
<div style="position:absolute;left:379.48px;top:551.17px;width:400px;text-align:center;line-height:20px;height:20px;font-size:15.5px;font-weight:bold;font-style:normal;color:#474747;letter-spacing:0.55px;transform:scale(1.0,1.08);transform-origin:50% 15.50px;white-space:nowrap">84.5</div>
<div style="position:absolute;left:475.50px;top:551.17px;width:400px;text-align:center;line-height:20px;height:20px;font-size:15.5px;font-weight:normal;font-style:normal;color:#474747;-webkit-text-stroke:0.3px #474747;transform:scale(1.0,1.08);transform-origin:50% 15.50px;white-space:nowrap">66.7</div>
<div style="position:absolute;left:572.30px;top:551.17px;width:400px;text-align:center;line-height:20px;height:20px;font-size:15.2px;font-weight:normal;font-style:italic;color:#05a83c;-webkit-text-stroke:0.3px #05a83c;transform:scale(1.0,1.1);transform-origin:50% 15.50px;white-space:nowrap">18</div>
<div style="position:absolute;left:666.30px;top:551.17px;width:400px;text-align:center;line-height:20px;height:20px;font-size:15.2px;font-weight:normal;font-style:italic;color:#2b5bbe;-webkit-text-stroke:0.3px #2b5bbe;transform:scale(1.0,1.1);transform-origin:50% 15.50px;white-space:nowrap">250.9</div>
<div style="position:absolute;left:760.70px;top:551.17px;width:400px;text-align:center;line-height:20px;height:20px;font-size:15.2px;font-weight:normal;font-style:italic;color:#2b5bbe;-webkit-text-stroke:0.3px #2b5bbe;transform:scale(1.0,1.1);transform-origin:50% 15.50px;white-space:nowrap">95.2</div>
<div style="position:absolute;left:-73.77px;top:573.56px;width:400px;text-align:center;line-height:20px;height:20px;font-size:13.9px;font-weight:bold;font-style:normal;color:#505050;letter-spacing:0.05px;transform:scale(1.0,1.1);transform-origin:50% 15.00px;white-space:nowrap">DÉC. 22</div>
<div style="position:absolute;left:89.28px;top:573.56px;width:400px;text-align:center;line-height:20px;height:20px;font-size:15.5px;font-weight:bold;font-style:normal;color:#474747;letter-spacing:0.55px;transform:scale(1.0,1.08);transform-origin:50% 15.50px;white-space:nowrap">227.3</div>
<div style="position:absolute;left:185.50px;top:573.56px;width:400px;text-align:center;line-height:20px;height:20px;font-size:15.5px;font-weight:normal;font-style:normal;color:#474747;-webkit-text-stroke:0.3px #474747;transform:scale(1.0,1.08);transform-origin:50% 15.50px;white-space:nowrap">165.9</div>
<div style="position:absolute;left:282.20px;top:574.06px;width:400px;text-align:center;line-height:20px;height:20px;font-size:14.8px;font-weight:normal;font-style:italic;color:#05a83c;-webkit-text-stroke:0.3px #05a83c;transform:scale(1.0,1.1);transform-origin:50% 15.00px;white-space:nowrap">61 $</div>
<div style="position:absolute;left:379.48px;top:573.56px;width:400px;text-align:center;line-height:20px;height:20px;font-size:15.5px;font-weight:bold;font-style:normal;color:#474747;letter-spacing:0.55px;transform:scale(1.0,1.08);transform-origin:50% 15.50px;white-space:nowrap">86.3</div>
<div style="position:absolute;left:475.50px;top:573.56px;width:400px;text-align:center;line-height:20px;height:20px;font-size:15.5px;font-weight:normal;font-style:normal;color:#474747;-webkit-text-stroke:0.3px #474747;transform:scale(1.0,1.08);transform-origin:50% 15.50px;white-space:nowrap">62.7</div>
<div style="position:absolute;left:572.30px;top:573.56px;width:400px;text-align:center;line-height:20px;height:20px;font-size:15.2px;font-weight:normal;font-style:italic;color:#05a83c;-webkit-text-stroke:0.3px #05a83c;transform:scale(1.0,1.1);transform-origin:50% 15.50px;white-space:nowrap">24</div>
<div style="position:absolute;left:666.30px;top:573.56px;width:400px;text-align:center;line-height:20px;height:20px;font-size:15.2px;font-weight:normal;font-style:italic;color:#2b5bbe;-webkit-text-stroke:0.3px #2b5bbe;transform:scale(1.0,1.1);transform-origin:50% 15.50px;white-space:nowrap">252.8</div>
<div style="position:absolute;left:760.70px;top:573.56px;width:400px;text-align:center;line-height:20px;height:20px;font-size:15.2px;font-weight:normal;font-style:italic;color:#2b5bbe;-webkit-text-stroke:0.3px #2b5bbe;transform:scale(1.0,1.1);transform-origin:50% 15.50px;white-space:nowrap">95.9</div>
<div style="position:absolute;left:-73.77px;top:595.95px;width:400px;text-align:center;line-height:20px;height:20px;font-size:13.9px;font-weight:bold;font-style:normal;color:#505050;letter-spacing:0.05px;transform:scale(1.0,1.1);transform-origin:50% 15.00px;white-space:nowrap">JANV. 23</div>
<div style="position:absolute;left:89.28px;top:595.95px;width:400px;text-align:center;line-height:20px;height:20px;font-size:15.5px;font-weight:bold;font-style:normal;color:#474747;letter-spacing:0.55px;transform:scale(1.0,1.08);transform-origin:50% 15.50px;white-space:nowrap">231.5</div>
<div style="position:absolute;left:185.50px;top:595.95px;width:400px;text-align:center;line-height:20px;height:20px;font-size:15.5px;font-weight:normal;font-style:normal;color:#474747;-webkit-text-stroke:0.3px #474747;transform:scale(1.0,1.08);transform-origin:50% 15.50px;white-space:nowrap">170.5</div>
<div style="position:absolute;left:282.20px;top:596.45px;width:400px;text-align:center;line-height:20px;height:20px;font-size:14.8px;font-weight:normal;font-style:italic;color:#05a83c;-webkit-text-stroke:0.3px #05a83c;transform:scale(1.0,1.1);transform-origin:50% 15.00px;white-space:nowrap">61 $</div>
<div style="position:absolute;left:379.48px;top:595.95px;width:400px;text-align:center;line-height:20px;height:20px;font-size:15.5px;font-weight:bold;font-style:normal;color:#474747;letter-spacing:0.55px;transform:scale(1.0,1.08);transform-origin:50% 15.50px;white-space:nowrap">87.9</div>
<div style="position:absolute;left:475.50px;top:595.95px;width:400px;text-align:center;line-height:20px;height:20px;font-size:15.5px;font-weight:normal;font-style:normal;color:#474747;-webkit-text-stroke:0.3px #474747;transform:scale(1.0,1.08);transform-origin:50% 15.50px;white-space:nowrap">65.3</div>
<div style="position:absolute;left:572.30px;top:595.95px;width:400px;text-align:center;line-height:20px;height:20px;font-size:15.2px;font-weight:normal;font-style:italic;color:#05a83c;-webkit-text-stroke:0.3px #05a83c;transform:scale(1.0,1.1);transform-origin:50% 15.50px;white-space:nowrap">23</div>
<div style="position:absolute;left:666.30px;top:595.95px;width:400px;text-align:center;line-height:20px;height:20px;font-size:15.2px;font-weight:normal;font-style:italic;color:#2b5bbe;-webkit-text-stroke:0.3px #2b5bbe;transform:scale(1.0,1.1);transform-origin:50% 15.50px;white-space:nowrap">254.5</div>
<div style="position:absolute;left:760.70px;top:595.95px;width:400px;text-align:center;line-height:20px;height:20px;font-size:15.2px;font-weight:normal;font-style:italic;color:#2b5bbe;-webkit-text-stroke:0.3px #2b5bbe;transform:scale(1.0,1.1);transform-origin:50% 15.50px;white-space:nowrap">96.5</div>
<div style="position:absolute;left:-73.77px;top:618.34px;width:400px;text-align:center;line-height:20px;height:20px;font-size:13.9px;font-weight:bold;font-style:normal;color:#505050;letter-spacing:0.05px;transform:scale(1.0,1.1);transform-origin:50% 15.00px;white-space:nowrap">FÉVR. 23</div>
<div style="position:absolute;left:89.28px;top:618.34px;width:400px;text-align:center;line-height:20px;height:20px;font-size:15.5px;font-weight:bold;font-style:normal;color:#474747;letter-spacing:0.55px;transform:scale(1.0,1.08);transform-origin:50% 15.50px;white-space:nowrap">235.4</div>
<div style="position:absolute;left:185.50px;top:618.34px;width:400px;text-align:center;line-height:20px;height:20px;font-size:15.5px;font-weight:normal;font-style:normal;color:#474747;-webkit-text-stroke:0.3px #474747;transform:scale(1.0,1.08);transform-origin:50% 15.50px;white-space:nowrap">183.4</div>
<div style="position:absolute;left:282.20px;top:618.84px;width:400px;text-align:center;line-height:20px;height:20px;font-size:14.8px;font-weight:normal;font-style:italic;color:#05a83c;-webkit-text-stroke:0.3px #05a83c;transform:scale(1.0,1.1);transform-origin:50% 15.00px;white-space:nowrap">52 $</div>
<div style="position:absolute;left:379.48px;top:618.34px;width:400px;text-align:center;line-height:20px;height:20px;font-size:15.5px;font-weight:bold;font-style:normal;color:#474747;letter-spacing:0.55px;transform:scale(1.0,1.08);transform-origin:50% 15.50px;white-space:nowrap">89.4</div>
<div style="position:absolute;left:475.50px;top:618.34px;width:400px;text-align:center;line-height:20px;height:20px;font-size:15.5px;font-weight:normal;font-style:normal;color:#474747;-webkit-text-stroke:0.3px #474747;transform:scale(1.0,1.08);transform-origin:50% 15.50px;white-space:nowrap">69.9</div>
<div style="position:absolute;left:572.30px;top:618.34px;width:400px;text-align:center;line-height:20px;height:20px;font-size:15.2px;font-weight:normal;font-style:italic;color:#05a83c;-webkit-text-stroke:0.3px #05a83c;transform:scale(1.0,1.1);transform-origin:50% 15.50px;white-space:nowrap">19</div>
<div style="position:absolute;left:666.30px;top:618.34px;width:400px;text-align:center;line-height:20px;height:20px;font-size:15.2px;font-weight:normal;font-style:italic;color:#2b5bbe;-webkit-text-stroke:0.3px #2b5bbe;transform:scale(1.0,1.1);transform-origin:50% 15.50px;white-space:nowrap">254.0</div>
<div style="position:absolute;left:760.70px;top:618.34px;width:400px;text-align:center;line-height:20px;height:20px;font-size:15.2px;font-weight:normal;font-style:italic;color:#2b5bbe;-webkit-text-stroke:0.3px #2b5bbe;transform:scale(1.0,1.1);transform-origin:50% 15.50px;white-space:nowrap">96.4</div>
<div style="position:absolute;left:-73.77px;top:640.73px;width:400px;text-align:center;line-height:20px;height:20px;font-size:13.9px;font-weight:bold;font-style:normal;color:#505050;letter-spacing:0.05px;transform:scale(1.0,1.1);transform-origin:50% 15.00px;white-space:nowrap">MARS 23</div>
<div style="position:absolute;left:89.28px;top:640.73px;width:400px;text-align:center;line-height:20px;height:20px;font-size:15.5px;font-weight:bold;font-style:normal;color:#474747;letter-spacing:0.55px;transform:scale(1.0,1.08);transform-origin:50% 15.50px;white-space:nowrap">239.9</div>
<div style="position:absolute;left:185.50px;top:640.73px;width:400px;text-align:center;line-height:20px;height:20px;font-size:15.5px;font-weight:normal;font-style:normal;color:#474747;-webkit-text-stroke:0.3px #474747;transform:scale(1.0,1.08);transform-origin:50% 15.50px;white-space:nowrap">197.6</div>
<div style="position:absolute;left:282.20px;top:641.23px;width:400px;text-align:center;line-height:20px;height:20px;font-size:14.8px;font-weight:normal;font-style:italic;color:#05a83c;-webkit-text-stroke:0.3px #05a83c;transform:scale(1.0,1.1);transform-origin:50% 15.00px;white-space:nowrap">42 $</div>
<div style="position:absolute;left:379.48px;top:640.73px;width:400px;text-align:center;line-height:20px;height:20px;font-size:15.5px;font-weight:bold;font-style:normal;color:#474747;letter-spacing:0.55px;transform:scale(1.0,1.08);transform-origin:50% 15.50px;white-space:nowrap">91.1</div>
<div style="position:absolute;left:475.50px;top:640.73px;width:400px;text-align:center;line-height:20px;height:20px;font-size:15.5px;font-weight:normal;font-style:normal;color:#474747;-webkit-text-stroke:0.3px #474747;transform:scale(1.0,1.08);transform-origin:50% 15.50px;white-space:nowrap">74.5</div>
<div style="position:absolute;left:572.30px;top:640.73px;width:400px;text-align:center;line-height:20px;height:20px;font-size:15.2px;font-weight:normal;font-style:italic;color:#05a83c;-webkit-text-stroke:0.3px #05a83c;transform:scale(1.0,1.1);transform-origin:50% 15.50px;white-space:nowrap">17</div>
<div style="position:absolute;left:666.30px;top:640.73px;width:400px;text-align:center;line-height:20px;height:20px;font-size:15.2px;font-weight:normal;font-style:italic;color:#2b5bbe;-webkit-text-stroke:0.3px #2b5bbe;transform:scale(1.0,1.1);transform-origin:50% 15.50px;white-space:nowrap">253.5</div>
<div style="position:absolute;left:760.70px;top:640.73px;width:400px;text-align:center;line-height:20px;height:20px;font-size:15.2px;font-weight:normal;font-style:italic;color:#2b5bbe;-webkit-text-stroke:0.3px #2b5bbe;transform:scale(1.0,1.1);transform-origin:50% 15.50px;white-space:nowrap">96.2</div>
<div style="position:absolute;left:-73.77px;top:663.12px;width:400px;text-align:center;line-height:20px;height:20px;font-size:13.9px;font-weight:bold;font-style:normal;color:#505050;letter-spacing:0.05px;transform:scale(1.0,1.1);transform-origin:50% 15.00px;white-space:nowrap">AVR. 23</div>
<div style="position:absolute;left:89.28px;top:663.12px;width:400px;text-align:center;line-height:20px;height:20px;font-size:15.5px;font-weight:bold;font-style:normal;color:#474747;letter-spacing:0.55px;transform:scale(1.0,1.08);transform-origin:50% 15.50px;white-space:nowrap">244.0</div>
<div style="position:absolute;left:185.50px;top:663.12px;width:400px;text-align:center;line-height:20px;height:20px;font-size:15.5px;font-weight:normal;font-style:normal;color:#474747;-webkit-text-stroke:0.3px #474747;transform:scale(1.0,1.08);transform-origin:50% 15.50px;white-space:nowrap">206.9</div>
<div style="position:absolute;left:282.20px;top:663.62px;width:400px;text-align:center;line-height:20px;height:20px;font-size:14.8px;font-weight:normal;font-style:italic;color:#05a83c;-webkit-text-stroke:0.3px #05a83c;transform:scale(1.0,1.1);transform-origin:50% 15.00px;white-space:nowrap">37 $</div>
<div style="position:absolute;left:379.48px;top:663.12px;width:400px;text-align:center;line-height:20px;height:20px;font-size:15.5px;font-weight:bold;font-style:normal;color:#474747;letter-spacing:0.55px;transform:scale(1.0,1.08);transform-origin:50% 15.50px;white-space:nowrap">92.7</div>
<div style="position:absolute;left:475.50px;top:663.12px;width:400px;text-align:center;line-height:20px;height:20px;font-size:15.5px;font-weight:normal;font-style:normal;color:#474747;-webkit-text-stroke:0.3px #474747;transform:scale(1.0,1.08);transform-origin:50% 15.50px;white-space:nowrap">78.4</div>
<div style="position:absolute;left:572.30px;top:663.12px;width:400px;text-align:center;line-height:20px;height:20px;font-size:15.2px;font-weight:normal;font-style:italic;color:#05a83c;-webkit-text-stroke:0.3px #05a83c;transform:scale(1.0,1.1);transform-origin:50% 15.50px;white-space:nowrap">14</div>
<div style="position:absolute;left:666.30px;top:663.12px;width:400px;text-align:center;line-height:20px;height:20px;font-size:15.2px;font-weight:normal;font-style:italic;color:#2b5bbe;-webkit-text-stroke:0.3px #2b5bbe;transform:scale(1.0,1.1);transform-origin:50% 15.50px;white-space:nowrap">256.8</div>
<div style="position:absolute;left:760.70px;top:663.12px;width:400px;text-align:center;line-height:20px;height:20px;font-size:15.2px;font-weight:normal;font-style:italic;color:#2b5bbe;-webkit-text-stroke:0.3px #2b5bbe;transform:scale(1.0,1.1);transform-origin:50% 15.50px;white-space:nowrap">97.4</div>
<div style="position:absolute;left:-73.77px;top:685.51px;width:400px;text-align:center;line-height:20px;height:20px;font-size:13.9px;font-weight:bold;font-style:normal;color:#505050;letter-spacing:0.05px;transform:scale(1.0,1.1);transform-origin:50% 15.00px;white-space:nowrap">MAI 23</div>
<div style="position:absolute;left:89.28px;top:685.51px;width:400px;text-align:center;line-height:20px;height:20px;font-size:15.5px;font-weight:bold;font-style:normal;color:#474747;letter-spacing:0.55px;transform:scale(1.0,1.08);transform-origin:50% 15.50px;white-space:nowrap">255.9</div>
<div style="position:absolute;left:185.50px;top:685.51px;width:400px;text-align:center;line-height:20px;height:20px;font-size:15.5px;font-weight:normal;font-style:normal;color:#474747;-webkit-text-stroke:0.3px #474747;transform:scale(1.0,1.08);transform-origin:50% 15.50px;white-space:nowrap">224.9</div>
<div style="position:absolute;left:282.20px;top:686.01px;width:400px;text-align:center;line-height:20px;height:20px;font-size:14.8px;font-weight:normal;font-style:italic;color:#05a83c;-webkit-text-stroke:0.3px #05a83c;transform:scale(1.0,1.1);transform-origin:50% 15.00px;white-space:nowrap">31 $</div>
<div style="position:absolute;left:379.48px;top:685.51px;width:400px;text-align:center;line-height:20px;height:20px;font-size:15.5px;font-weight:bold;font-style:normal;color:#474747;letter-spacing:0.55px;transform:scale(1.0,1.08);transform-origin:50% 15.50px;white-space:nowrap">97.2</div>
<div style="position:absolute;left:475.50px;top:685.51px;width:400px;text-align:center;line-height:20px;height:20px;font-size:15.5px;font-weight:normal;font-style:normal;color:#474747;-webkit-text-stroke:0.3px #474747;transform:scale(1.0,1.08);transform-origin:50% 15.50px;white-space:nowrap">85.0</div>
<div style="position:absolute;left:572.30px;top:685.51px;width:400px;text-align:center;line-height:20px;height:20px;font-size:15.2px;font-weight:normal;font-style:italic;color:#05a83c;-webkit-text-stroke:0.3px #05a83c;transform:scale(1.0,1.1);transform-origin:50% 15.50px;white-space:nowrap">12</div>
<div style="position:absolute;left:666.30px;top:685.51px;width:400px;text-align:center;line-height:20px;height:20px;font-size:15.2px;font-weight:normal;font-style:italic;color:#2b5bbe;-webkit-text-stroke:0.3px #2b5bbe;transform:scale(1.0,1.1);transform-origin:50% 15.50px;white-space:nowrap">270.1</div>
<div style="position:absolute;left:760.70px;top:685.51px;width:400px;text-align:center;line-height:20px;height:20px;font-size:15.2px;font-weight:normal;font-style:italic;color:#2b5bbe;-webkit-text-stroke:0.3px #2b5bbe;transform:scale(1.0,1.1);transform-origin:50% 15.50px;white-space:nowrap">102.5</div>
<div style="position:absolute;left:-73.77px;top:707.90px;width:400px;text-align:center;line-height:20px;height:20px;font-size:13.9px;font-weight:bold;font-style:normal;color:#505050;letter-spacing:0.05px;transform:scale(1.0,1.1);transform-origin:50% 15.00px;white-space:nowrap">JUIN 23</div>
<div style="position:absolute;left:89.28px;top:707.90px;width:400px;text-align:center;line-height:20px;height:20px;font-size:15.5px;font-weight:bold;font-style:normal;color:#474747;letter-spacing:0.55px;transform:scale(1.0,1.08);transform-origin:50% 15.50px;white-space:nowrap">261.6</div>
<div style="position:absolute;left:185.50px;top:707.90px;width:400px;text-align:center;line-height:20px;height:20px;font-size:15.5px;font-weight:normal;font-style:normal;color:#474747;-webkit-text-stroke:0.3px #474747;transform:scale(1.0,1.08);transform-origin:50% 15.50px;white-space:nowrap">228.8</div>
<div style="position:absolute;left:282.20px;top:708.40px;width:400px;text-align:center;line-height:20px;height:20px;font-size:14.8px;font-weight:normal;font-style:italic;color:#05a83c;-webkit-text-stroke:0.3px #05a83c;transform:scale(1.0,1.1);transform-origin:50% 15.00px;white-space:nowrap">33 $</div>
<div style="position:absolute;left:379.48px;top:707.90px;width:400px;text-align:center;line-height:20px;height:20px;font-size:15.5px;font-weight:bold;font-style:normal;color:#474747;letter-spacing:0.55px;transform:scale(1.0,1.08);transform-origin:50% 15.50px;white-space:nowrap">99.3</div>
<div style="position:absolute;left:475.50px;top:707.90px;width:400px;text-align:center;line-height:20px;height:20px;font-size:15.5px;font-weight:normal;font-style:normal;color:#474747;-webkit-text-stroke:0.3px #474747;transform:scale(1.0,1.08);transform-origin:50% 15.50px;white-space:nowrap">87.1</div>
<div style="position:absolute;left:572.30px;top:707.90px;width:400px;text-align:center;line-height:20px;height:20px;font-size:15.2px;font-weight:normal;font-style:italic;color:#05a83c;-webkit-text-stroke:0.3px #05a83c;transform:scale(1.0,1.1);transform-origin:50% 15.50px;white-space:nowrap">12</div>
<div style="position:absolute;left:666.30px;top:707.90px;width:400px;text-align:center;line-height:20px;height:20px;font-size:15.2px;font-weight:normal;font-style:italic;color:#2b5bbe;-webkit-text-stroke:0.3px #2b5bbe;transform:scale(1.0,1.1);transform-origin:50% 15.50px;white-space:nowrap">276.4</div>
<div style="position:absolute;left:760.70px;top:707.90px;width:400px;text-align:center;line-height:20px;height:20px;font-size:15.2px;font-weight:normal;font-style:italic;color:#2b5bbe;-webkit-text-stroke:0.3px #2b5bbe;transform:scale(1.0,1.1);transform-origin:50% 15.50px;white-space:nowrap">104.9</div>
<div style="position:absolute;left:-73.77px;top:730.29px;width:400px;text-align:center;line-height:20px;height:20px;font-size:13.9px;font-weight:bold;font-style:normal;color:#505050;letter-spacing:0.05px;transform:scale(1.0,1.1);transform-origin:50% 15.00px;white-space:nowrap">JUIL. 23</div>
<div style="position:absolute;left:89.28px;top:730.29px;width:400px;text-align:center;line-height:20px;height:20px;font-size:15.5px;font-weight:bold;font-style:normal;color:#474747;letter-spacing:0.55px;transform:scale(1.0,1.08);transform-origin:50% 15.50px;white-space:nowrap">258.6</div>
<div style="position:absolute;left:185.50px;top:730.29px;width:400px;text-align:center;line-height:20px;height:20px;font-size:15.5px;font-weight:normal;font-style:normal;color:#474747;-webkit-text-stroke:0.3px #474747;transform:scale(1.0,1.08);transform-origin:50% 15.50px;white-space:nowrap">224.3</div>
<div style="position:absolute;left:282.20px;top:730.79px;width:400px;text-align:center;line-height:20px;height:20px;font-size:14.8px;font-weight:normal;font-style:italic;color:#05a83c;-webkit-text-stroke:0.3px #05a83c;transform:scale(1.0,1.1);transform-origin:50% 15.00px;white-space:nowrap">34 $</div>
<div style="position:absolute;left:379.48px;top:730.29px;width:400px;text-align:center;line-height:20px;height:20px;font-size:15.5px;font-weight:bold;font-style:normal;color:#474747;letter-spacing:0.55px;transform:scale(1.0,1.08);transform-origin:50% 15.50px;white-space:nowrap">98.2</div>
<div style="position:absolute;left:475.50px;top:730.29px;width:400px;text-align:center;line-height:20px;height:20px;font-size:15.5px;font-weight:normal;font-style:normal;color:#474747;-webkit-text-stroke:0.3px #474747;transform:scale(1.0,1.08);transform-origin:50% 15.50px;white-space:nowrap">84.8</div>
<div style="position:absolute;left:572.30px;top:730.29px;width:400px;text-align:center;line-height:20px;height:20px;font-size:15.2px;font-weight:normal;font-style:italic;color:#05a83c;-webkit-text-stroke:0.3px #05a83c;transform:scale(1.0,1.1);transform-origin:50% 15.50px;white-space:nowrap">13</div>
<div style="position:absolute;left:666.30px;top:730.29px;width:400px;text-align:center;line-height:20px;height:20px;font-size:15.2px;font-weight:normal;font-style:italic;color:#2b5bbe;-webkit-text-stroke:0.3px #2b5bbe;transform:scale(1.0,1.1);transform-origin:50% 15.50px;white-space:nowrap">271.6</div>
<div style="position:absolute;left:760.70px;top:730.29px;width:400px;text-align:center;line-height:20px;height:20px;font-size:15.2px;font-weight:normal;font-style:italic;color:#2b5bbe;-webkit-text-stroke:0.3px #2b5bbe;transform:scale(1.0,1.1);transform-origin:50% 15.50px;white-space:nowrap">103.1</div>
<div style="position:absolute;left:-73.77px;top:752.68px;width:400px;text-align:center;line-height:20px;height:20px;font-size:13.9px;font-weight:bold;font-style:normal;color:#505050;letter-spacing:0.05px;transform:scale(1.0,1.1);transform-origin:50% 15.00px;white-space:nowrap">AOÛT 23</div>
<div style="position:absolute;left:89.28px;top:752.68px;width:400px;text-align:center;line-height:20px;height:20px;font-size:15.5px;font-weight:bold;font-style:normal;color:#474747;letter-spacing:0.55px;transform:scale(1.0,1.08);transform-origin:50% 15.50px;white-space:nowrap">232.8</div>
<div style="position:absolute;left:185.50px;top:752.68px;width:400px;text-align:center;line-height:20px;height:20px;font-size:15.5px;font-weight:normal;font-style:normal;color:#474747;-webkit-text-stroke:0.3px #474747;transform:scale(1.0,1.08);transform-origin:50% 15.50px;white-space:nowrap">201.7</div>
<div style="position:absolute;left:282.20px;top:753.18px;width:400px;text-align:center;line-height:20px;height:20px;font-size:14.8px;font-weight:normal;font-style:italic;color:#05a83c;-webkit-text-stroke:0.3px #05a83c;transform:scale(1.0,1.1);transform-origin:50% 15.00px;white-space:nowrap">31 $</div>
<div style="position:absolute;left:379.48px;top:752.68px;width:400px;text-align:center;line-height:20px;height:20px;font-size:15.5px;font-weight:bold;font-style:normal;color:#474747;letter-spacing:0.55px;transform:scale(1.0,1.08);transform-origin:50% 15.50px;white-space:nowrap">88.4</div>
<div style="position:absolute;left:475.50px;top:752.68px;width:400px;text-align:center;line-height:20px;height:20px;font-size:15.5px;font-weight:normal;font-style:normal;color:#474747;-webkit-text-stroke:0.3px #474747;transform:scale(1.0,1.08);transform-origin:50% 15.50px;white-space:nowrap">76.7</div>
<div style="position:absolute;left:572.30px;top:752.68px;width:400px;text-align:center;line-height:20px;height:20px;font-size:15.2px;font-weight:normal;font-style:italic;color:#05a83c;-webkit-text-stroke:0.3px #05a83c;transform:scale(1.0,1.1);transform-origin:50% 15.50px;white-space:nowrap">12</div>
<div style="position:absolute;left:666.30px;top:752.68px;width:400px;text-align:center;line-height:20px;height:20px;font-size:15.2px;font-weight:normal;font-style:italic;color:#2b5bbe;-webkit-text-stroke:0.3px #2b5bbe;transform:scale(1.0,1.1);transform-origin:50% 15.50px;white-space:nowrap">262.6</div>
<div style="position:absolute;left:760.70px;top:752.68px;width:400px;text-align:center;line-height:20px;height:20px;font-size:15.2px;font-weight:normal;font-style:italic;color:#2b5bbe;-webkit-text-stroke:0.3px #2b5bbe;transform:scale(1.0,1.1);transform-origin:50% 15.50px;white-space:nowrap">99.7</div>
<div style="position:absolute;left:-73.77px;top:775.07px;width:400px;text-align:center;line-height:20px;height:20px;font-size:13.9px;font-weight:bold;font-style:normal;color:#505050;letter-spacing:0.05px;transform:scale(1.0,1.1);transform-origin:50% 15.00px;white-space:nowrap">SEPT. 23</div>
<div style="position:absolute;left:89.28px;top:775.07px;width:400px;text-align:center;line-height:20px;height:20px;font-size:15.5px;font-weight:bold;font-style:normal;color:#474747;letter-spacing:0.55px;transform:scale(1.0,1.08);transform-origin:50% 15.50px;white-space:nowrap">214.8</div>
<div style="position:absolute;left:185.50px;top:775.07px;width:400px;text-align:center;line-height:20px;height:20px;font-size:15.5px;font-weight:normal;font-style:normal;color:#474747;-webkit-text-stroke:0.3px #474747;transform:scale(1.0,1.08);transform-origin:50% 15.50px;white-space:nowrap">178.4</div>
<div style="position:absolute;left:282.20px;top:775.57px;width:400px;text-align:center;line-height:20px;height:20px;font-size:14.8px;font-weight:normal;font-style:italic;color:#05a83c;-webkit-text-stroke:0.3px #05a83c;transform:scale(1.0,1.1);transform-origin:50% 15.00px;white-space:nowrap">36 $</div>
<div style="position:absolute;left:379.48px;top:775.07px;width:400px;text-align:center;line-height:20px;height:20px;font-size:15.5px;font-weight:bold;font-style:normal;color:#474747;letter-spacing:0.55px;transform:scale(1.0,1.08);transform-origin:50% 15.50px;white-space:nowrap">81.6</div>
<div style="position:absolute;left:475.50px;top:775.07px;width:400px;text-align:center;line-height:20px;height:20px;font-size:15.5px;font-weight:normal;font-style:normal;color:#474747;-webkit-text-stroke:0.3px #474747;transform:scale(1.0,1.08);transform-origin:50% 15.50px;white-space:nowrap">67.9</div>
<div style="position:absolute;left:572.30px;top:775.07px;width:400px;text-align:center;line-height:20px;height:20px;font-size:15.2px;font-weight:normal;font-style:italic;color:#05a83c;-webkit-text-stroke:0.3px #05a83c;transform:scale(1.0,1.1);transform-origin:50% 15.50px;white-space:nowrap">14</div>
<div style="position:absolute;left:666.30px;top:775.07px;width:400px;text-align:center;line-height:20px;height:20px;font-size:15.2px;font-weight:normal;font-style:italic;color:#2b5bbe;-webkit-text-stroke:0.3px #2b5bbe;transform:scale(1.0,1.1);transform-origin:50% 15.50px;white-space:nowrap">258.1</div>
<div style="position:absolute;left:760.70px;top:775.07px;width:400px;text-align:center;line-height:20px;height:20px;font-size:15.2px;font-weight:normal;font-style:italic;color:#2b5bbe;-webkit-text-stroke:0.3px #2b5bbe;transform:scale(1.0,1.1);transform-origin:50% 15.50px;white-space:nowrap">97.9</div>
</body></html>
